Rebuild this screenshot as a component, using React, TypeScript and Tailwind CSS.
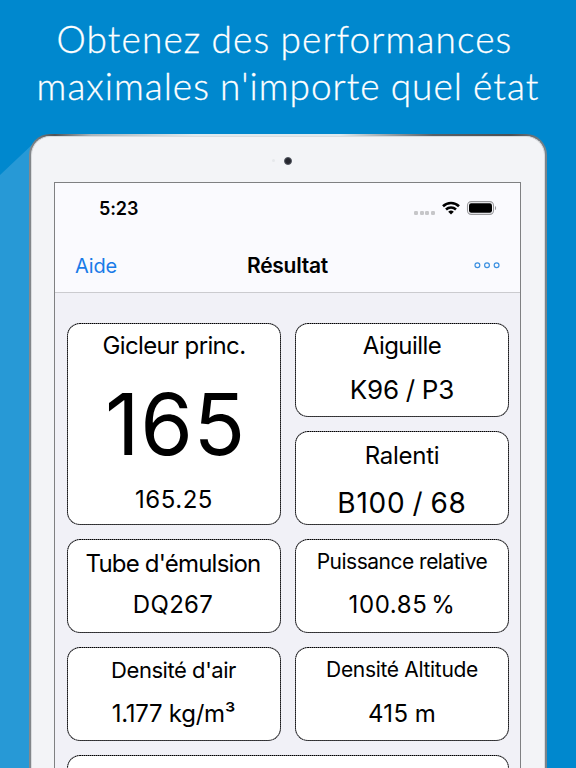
import { clsx } from "clsx";

interface CardProps {
  label: string;
  value: string;
  labelClass: string;
  valueClass: string;
  className?: string;
}

const cardStyle = "rounded-[13px] border border-dotted border-black [background:linear-gradient(#fff,#fff)_padding-box,#6e6e73_border-box] text-center text-black whitespace-nowrap";

function ResultCard({ label, value, labelClass, valueClass, className }: CardProps) {
  return (
    <div className={clsx(cardStyle, "h-[94px]", className)}>
      <div className={labelClass}>{label}</div>
      <div className={valueClass}>{value}</div>
    </div>
  );
}

function WifiIcon() {
  return (
    <svg className="ml-[7px] h-[14px] w-[18px]" viewBox="0 0 18 14" fill="none" stroke="#000" strokeWidth="2.6">
      <path d="M1 5.2a11.6 11.6 0 0 1 16 0" />
      <path d="M4 8.5a7.4 7.4 0 0 1 10 0" />
      <path d="M9 13.6 6.2 10.8a4.1 4.1 0 0 1 5.6 0Z" fill="#000" stroke="none" />
    </svg>
  );
}

function BatteryIcon() {
  return (
    <svg className="ml-[6px] h-[14px] w-[31px]" viewBox="0 0 31 14">
      <rect x="1.5" y="0.6" width="26" height="12.8" rx="3.8" fill="none" stroke="#98989b" strokeWidth="1.1" />
      <rect x="3" y="2.2" width="23" height="9.6" rx="2.2" fill="#000" />
      <path d="M29 4.9c1.5.6 1.5 3.6 0 4.2Z" fill="#98989b" />
    </svg>
  );
}

function StatusBar() {
  return (
    <div className="flex h-[24px] items-center pl-[44px]">
      <span className="w-[80px] pt-px text-[18px] leading-6 font-semibold tracking-[-0.1px]">5:23</span>
      <div className="ml-[235px] flex items-center">
        <div className="mt-[9px] flex gap-[1.6px]">
          {[0, 1, 2, 3].map(i => <span key={i} className="size-[4px] rounded-[1.2px] bg-[#c6c6c9]" />)}
        </div>
        <WifiIcon />
        <BatteryIcon />
      </div>
    </div>
  );
}

function NavBar() {
  return (
    <div className="mt-[30px] grid h-[30px] grid-cols-[1fr_auto_1fr] items-center px-[20px]">
      <span className="text-[20px] leading-[30px] tracking-[-0.15px] text-[#197be8]">Aide</span>
      <span className="pt-px text-[21px] leading-[30px] font-semibold tracking-[-0.25px]">Résultat</span>
      <svg className="h-[8px] w-[28px] justify-self-end" viewBox="0 0 28 8" fill="none" stroke="#3a8fe0" strokeWidth="1.2">
        <circle cx="5.4" cy="3.2" r="2.4" />
        <circle cx="15" cy="3.2" r="2.4" />
        <circle cx="24.6" cy="3.2" r="2.4" />
      </svg>
    </div>
  );
}

export default function App() {
  return (
    <div className="relative h-[768px] w-[576px] overflow-hidden bg-[#0088ce] font-['Inter',sans-serif]">
      {/* light band behind the tablet */}
      <svg className="absolute inset-0" width="576" height="768">
        <path d="M0 175 36 141V768H0Z" fill="#2799d6" />
      </svg>

      <h1 className="relative h-[134px] pt-[15px] text-center font-['Lato',sans-serif] text-[37px] leading-[47px] font-light whitespace-nowrap text-white [-webkit-text-stroke:0.3px_white]">
        <span className="block pr-[7px] tracking-[1.12px] [word-spacing:-1px]">Obtenez des performances</span>
        <span className="block tracking-[1.02px] [word-spacing:-1px]">maximales n'importe quel état</span>
      </h1>

      {/* tablet: metal rim, bezel, screen */}
      <div className="relative ml-[29px] h-[700px] w-[518px] rounded-t-[21px] bg-[linear-gradient(to_right,#85898d_0%,#4f5357_5%,#a9b4bb_12%,#dfe9ee_32%,#dfe9ee_60%,#596067_78%,#4c5054_93%,#7c858c_100%)] px-[2px] pt-[2px]">
        <div className="h-full rounded-t-[19px] border-x border-t border-[#d9dcdf] bg-[#f3f4f7]">
          <div className="flex h-[45px] justify-center pt-[20px]">
            <span className="mt-[2px] mr-[9px] size-[3px] rounded-full bg-[#e6e8eb]" />
            <span className="mr-[12px] size-[8px] rounded-full border border-[#555963] bg-[#26272f]" />
          </div>
          <div className="ml-[22px] h-[640px] w-[467px] border border-[#7f8082] bg-[#f1f1f7]">
            <header className="h-[110px] border-b border-[#cbcbcf] bg-[#fafafe] pt-[13px]">
              <StatusBar />
              <NavBar />
            </header>

            <main className="grid grid-cols-[214px_214px] gap-[14px] pt-[30px] pl-[12px]">
              <div className={clsx(cardStyle, "row-span-2 h-[202px]")}>
                <div className="text-[24px] leading-[44px] tracking-[-0.65px]">Gicleur princ.</div>
                <div className="pl-[3px] text-[85px] leading-[114px] tracking-[0.6px]">165</div>
                <div className="text-[24px] leading-[36px] tracking-[0.55px]">165.25</div>
              </div>
              <ResultCard label="Aiguille" value="K96 / P3"
                labelClass="text-[24px] leading-[44px] tracking-[-0.55px]"
                valueClass="text-[26px] leading-[43px] tracking-[-0.1px] [word-spacing:-0.5px]" />
              <ResultCard label="Ralenti" value="B100 / 68"
                labelClass="text-[24px] leading-[47px] tracking-[-0.27px]"
                valueClass="text-[28px] leading-[49px] tracking-[0.75px] [word-spacing:-1.5px]" />
              <ResultCard label="Tube d'émulsion" value="DQ267"
                labelClass="pr-[2px] text-[24px] leading-[48px] tracking-[-0.8px]"
                valueClass="pr-[2px] text-[24px] leading-[34px] tracking-[0.3px]" />
              <ResultCard label="Puissance relative" value="100.85 %"
                labelClass="text-[21px] leading-[44px] tracking-[-0.5px]"
                valueClass="text-[24px] leading-[42px] tracking-[0.6px] [word-spacing:-3.5px]" />
              <ResultCard label="Densité d'air" value="1.177 kg/m³"
                labelClass="pr-px text-[22px] leading-[44px] tracking-[-0.45px]"
                valueClass="pr-px text-[24px] leading-[43px] tracking-[-0.28px]" />
              <ResultCard label="Densité Altitude" value="415 m"
                labelClass="text-[21px] leading-[44px] tracking-[-0.32px]"
                valueClass="text-[24px] leading-[43px] tracking-[0.4px] [word-spacing:-1px]" />
              <div className={clsx(cardStyle, "col-span-2 h-[94px]")} />
            </main>
          </div>
        </div>
      </div>
    </div>
  );
}
